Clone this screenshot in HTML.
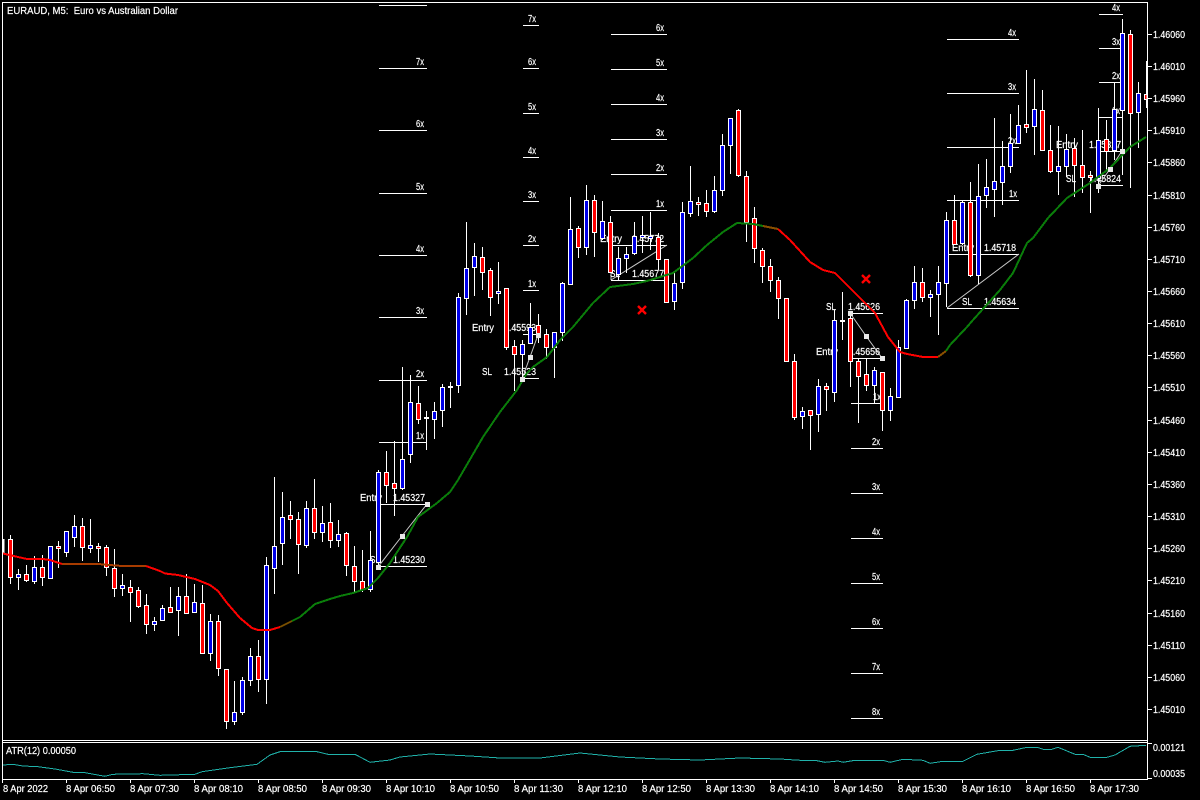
<!DOCTYPE html>
<html>
<head>
<meta charset="utf-8">
<title>EURAUD, M5</title>
<style>
html,body{margin:0;padding:0;background:#000;width:1200px;height:800px;overflow:hidden}
svg{display:block;position:absolute;left:0;top:0}
text{font-family:"Liberation Sans","DejaVu Sans",sans-serif;font-size:10px;fill:#fff;stroke:#fff;stroke-width:.2}
.c{shape-rendering:crispEdges}
.w{stroke:#fff;stroke-width:1;fill:none;shape-rendering:crispEdges}
.d{stroke:#c8c8c8;stroke-width:1;fill:none}
.m{fill:#e8e8e8}
.ma{fill:none;stroke-width:2;stroke-linejoin:round;shape-rendering:crispEdges}
</style>
</head>
<body>
<svg width="1200" height="800" viewBox="0 0 1200 800" xmlns="http://www.w3.org/2000/svg">
<rect width="1200" height="800" fill="#000"/>

<!-- Level lines -->
<path class="w" d="M379 5.5H427M379 68.5H427M379 130.5H427M379 193.5H427M379 255.5H427M379 317.5H427M379 380.5H427M379 442.5H427M379 504.5H427M379 566.5H427
M523 25.5H539M523 68.5H539M523 113.5H539M523 157.5H539M523 201.5H539M523 245.5H539M523 290.5H539M523 334.5H539M523 378.5H539
M611 34.5H667M611 69.5H667M611 104.5H667M611 139.5H667M611 174.5H667M611 210.5H667M611 245.5H667M611 280.5H667
M851 313.5H883M851 358.5H883M851 403.5H883M851 448.5H883M851 493.5H883M851 538.5H883M851 583.5H883M851 628.5H883M851 673.5H883M851 718.5H883
M947 39.5H1019M947 93.5H1019M947 147.5H1019M947 200.5H1019M947 254.5H1019M947 308.5H1019
M1099 14.5H1123M1099 48.5H1123M1099 82.5H1123M1099 117.5H1123M1099 151.5H1123M1099 185.5H1123"/>
<path class="d" d="M378 567L402 536L427 504M522 379L530 357L538 335M611 280L667 245M611 280V272M850 313L866 336L882 358M947 308L1019 254M1098 186L1110 169L1122 151"/>

<!-- Level labels -->
<text x="416" y="65" textLength="8" lengthAdjust="spacingAndGlyphs">7x</text>
<text x="416" y="127" textLength="8" lengthAdjust="spacingAndGlyphs">6x</text>
<text x="416" y="190" textLength="8" lengthAdjust="spacingAndGlyphs">5x</text>
<text x="416" y="252" textLength="8" lengthAdjust="spacingAndGlyphs">4x</text>
<text x="416" y="314" textLength="8" lengthAdjust="spacingAndGlyphs">3x</text>
<text x="416" y="377" textLength="8" lengthAdjust="spacingAndGlyphs">2x</text>
<text x="416" y="439" textLength="8" lengthAdjust="spacingAndGlyphs">1x</text>
<text x="360" y="501" textLength="22" lengthAdjust="spacingAndGlyphs">Entry</text>
<text x="393" y="501" textLength="32" lengthAdjust="spacingAndGlyphs">1.45327</text>
<text x="370" y="563" textLength="10" lengthAdjust="spacingAndGlyphs">SL</text>
<text x="393" y="563" textLength="32" lengthAdjust="spacingAndGlyphs">1.45230</text>

<text x="528" y="22" textLength="8" lengthAdjust="spacingAndGlyphs">7x</text>
<text x="528" y="65" textLength="8" lengthAdjust="spacingAndGlyphs">6x</text>
<text x="528" y="110" textLength="8" lengthAdjust="spacingAndGlyphs">5x</text>
<text x="528" y="154" textLength="8" lengthAdjust="spacingAndGlyphs">4x</text>
<text x="528" y="198" textLength="8" lengthAdjust="spacingAndGlyphs">3x</text>
<text x="528" y="242" textLength="8" lengthAdjust="spacingAndGlyphs">2x</text>
<text x="528" y="287" textLength="8" lengthAdjust="spacingAndGlyphs">1x</text>
<text x="472" y="331" textLength="22" lengthAdjust="spacingAndGlyphs">Entry</text>
<text x="504" y="331" textLength="32" lengthAdjust="spacingAndGlyphs">1.45593</text>
<text x="482" y="375" textLength="10" lengthAdjust="spacingAndGlyphs">SL</text>
<text x="504" y="375" textLength="32" lengthAdjust="spacingAndGlyphs">1.45523</text>

<text x="656" y="31" textLength="8" lengthAdjust="spacingAndGlyphs">6x</text>
<text x="656" y="66" textLength="8" lengthAdjust="spacingAndGlyphs">5x</text>
<text x="656" y="101" textLength="8" lengthAdjust="spacingAndGlyphs">4x</text>
<text x="656" y="136" textLength="8" lengthAdjust="spacingAndGlyphs">3x</text>
<text x="656" y="171" textLength="8" lengthAdjust="spacingAndGlyphs">2x</text>
<text x="656" y="207" textLength="8" lengthAdjust="spacingAndGlyphs">1x</text>
<text x="600" y="242" textLength="22" lengthAdjust="spacingAndGlyphs">Entry</text>
<text x="632" y="242" textLength="32" lengthAdjust="spacingAndGlyphs">1.45772</text>
<text x="610" y="277" textLength="10" lengthAdjust="spacingAndGlyphs">SL</text>
<text x="632" y="277" textLength="32" lengthAdjust="spacingAndGlyphs">1.45677</text>

<text x="826" y="310" textLength="10" lengthAdjust="spacingAndGlyphs">SL</text>
<text x="848" y="310" textLength="32" lengthAdjust="spacingAndGlyphs">1.45626</text>
<text x="816" y="355" textLength="22" lengthAdjust="spacingAndGlyphs">Entry</text>
<text x="848" y="355" textLength="32" lengthAdjust="spacingAndGlyphs">1.45656</text>
<text x="873" y="400" textLength="8" lengthAdjust="spacingAndGlyphs">1x</text>
<text x="872" y="445" textLength="8" lengthAdjust="spacingAndGlyphs">2x</text>
<text x="872" y="490" textLength="8" lengthAdjust="spacingAndGlyphs">3x</text>
<text x="872" y="535" textLength="8" lengthAdjust="spacingAndGlyphs">4x</text>
<text x="872" y="580" textLength="8" lengthAdjust="spacingAndGlyphs">5x</text>
<text x="872" y="625" textLength="8" lengthAdjust="spacingAndGlyphs">6x</text>
<text x="872" y="670" textLength="8" lengthAdjust="spacingAndGlyphs">7x</text>
<text x="872" y="715" textLength="8" lengthAdjust="spacingAndGlyphs">8x</text>

<text x="1008" y="36" textLength="8" lengthAdjust="spacingAndGlyphs">4x</text>
<text x="1008" y="90" textLength="8" lengthAdjust="spacingAndGlyphs">3x</text>
<text x="1008" y="144" textLength="8" lengthAdjust="spacingAndGlyphs">2x</text>
<text x="1009" y="197" textLength="8" lengthAdjust="spacingAndGlyphs">1x</text>
<text x="952" y="251" textLength="22" lengthAdjust="spacingAndGlyphs">Entry</text>
<text x="984" y="251" textLength="32" lengthAdjust="spacingAndGlyphs">1.45718</text>
<text x="962" y="305" textLength="10" lengthAdjust="spacingAndGlyphs">SL</text>
<text x="984" y="305" textLength="32" lengthAdjust="spacingAndGlyphs">1.45634</text>

<text x="1112" y="11" textLength="8" lengthAdjust="spacingAndGlyphs">4x</text>
<text x="1112" y="45" textLength="8" lengthAdjust="spacingAndGlyphs">3x</text>
<text x="1112" y="79" textLength="8" lengthAdjust="spacingAndGlyphs">2x</text>
<text x="1112" y="114" textLength="8" lengthAdjust="spacingAndGlyphs">1x</text>
<text x="1056" y="148" textLength="22" lengthAdjust="spacingAndGlyphs">Entry</text>
<text x="1089" y="148" textLength="32" lengthAdjust="spacingAndGlyphs">1.45817</text>
<text x="1066" y="182" textLength="10" lengthAdjust="spacingAndGlyphs">SL</text>
<text x="1089" y="182" textLength="32" lengthAdjust="spacingAndGlyphs">1.45824</text>

<!-- Candle wicks -->
<path class="w" d="M10.5 535V584M18.5 569V590M26.5 565V582M34.5 556V584M42.5 555V586M50.5 546V578M58.5 541V568M66.5 531V557M74.5 515V547M82.5 518V561M90.5 519V553M98.5 543V562M106.5 545V576M114.5 549V597M122.5 574V596M130.5 580V622M138.5 587V608M146.5 594V634M154.5 617V631M162.5 605V620M170.5 587V612M178.5 587V636M186.5 574V614M194.5 584V613M202.5 585V654M210.5 614V661M218.5 615V676M226.5 669V729M234.5 681V725M242.5 677V715M250.5 648V686M258.5 640V692M266.5 557V704M274.5 477V594M282.5 492V565M290.5 501V539M298.5 512V574M306.5 501V548M314.5 479V539M322.5 506V542M330.5 503V548M338.5 520V547M346.5 532V576M354.5 546V592M362.5 550V592M370.5 531V592M378.5 470V565M386.5 451V503M394.5 441V516M402.5 367V490M410.5 375V463M418.5 386V424M426.5 411V450M434.5 402V439M442.5 384V427M450.5 382V408M458.5 293V393M466.5 222V315M474.5 243V296M482.5 247V290M490.5 268V316M498.5 262V304M506.5 288V350M514.5 340V391M522.5 340V380M530.5 303V344M538.5 314V343M546.5 329V359M554.5 332V378M562.5 282V341M570.5 197V284M578.5 226V258M586.5 185V255M594.5 195V257M602.5 201V240M610.5 216V273M618.5 247V280M626.5 247V273M634.5 222V255M642.5 216V253M650.5 212V250M658.5 233V270M666.5 259V303M674.5 273V310M682.5 202V289M690.5 166V217M698.5 197V216M706.5 190V217M714.5 176V213M722.5 134V196M730.5 118V174M738.5 109V177M746.5 171V242M754.5 207V263M762.5 248V283M770.5 259V292M778.5 277V319M786.5 298V361M794.5 354V420M802.5 407V429M810.5 410V450M818.5 379V432M826.5 383V411M834.5 310V402M842.5 292V340M850.5 314V387M858.5 358V423M866.5 358V391M874.5 367V403M882.5 372V431M890.5 388V421M898.5 340V397M906.5 299V349M914.5 266V309M922.5 268V302M930.5 290V317M938.5 266V335M946.5 212V307M954.5 195V245M962.5 200V245M970.5 182V277M978.5 164V284M986.5 159V208M994.5 118V217M1002.5 141V205M1010.5 114V173M1018.5 105V143M1026.5 70V133M1034.5 79V155M1042.5 90V150M1050.5 125V173M1058.5 126V195M1066.5 134V177M1074.5 138V197M1082.5 130V193M1090.5 171V213M1098.5 108V193M1106.5 120V170M1114.5 83V160M1122.5 19V175M1130.5 30V188M1138.5 82V148M1146.5 61V108"/>

<!-- Blue bodies -->
<path class="c" fill="#0000e6" stroke="#fff" stroke-width="1" d="M3.5 539.5h.5v13h-.5zM16.5 574.5h4v3h-4zM32.5 567.5h4v14h-4zM48.5 546.5h4v32h-4zM64.5 531.5h4v21h-4zM72.5 526.5h4v11h-4zM88.5 545.5h4v3h-4zM120.5 585.5h4v3h-4zM152.5 621.5h4v3h-4zM160.5 608.5h4v12h-4zM176.5 596.5h4v14h-4zM192.5 602.5h4v10h-4zM208.5 621.5h4v32h-4zM232.5 712.5h4v9h-4zM240.5 680.5h4v32h-4zM248.5 656.5h4v24h-4zM264.5 565.5h4v114h-4zM272.5 546.5h4v22h-4zM280.5 517.5h4v26h-4zM304.5 508.5h4v37h-4zM320.5 523.5h4v9h-4zM336.5 534.5h4v6h-4zM368.5 560.5h4v29h-4zM376.5 472.5h4v90h-4zM400.5 459.5h4v29h-4zM408.5 402.5h4v52h-4zM424.5 417.5h4v1h-4zM432.5 411.5h4v8h-4zM440.5 387.5h4v23h-4zM448.5 386.5h4v1h-4zM456.5 297.5h4v88h-4zM464.5 268.5h4v30h-4zM472.5 256.5h4v11h-4zM496.5 291.5h4v2h-4zM520.5 344.5h4v10h-4zM528.5 327.5h4v16h-4zM552.5 332.5h4v15h-4zM560.5 283.5h4v49h-4zM568.5 229.5h4v55h-4zM584.5 200.5h4v47h-4zM600.5 221.5h4v17h-4zM616.5 258.5h4v16h-4zM624.5 254.5h4v4h-4zM632.5 236.5h4v17h-4zM640.5 235.5h4v2h-4zM648.5 236.5h4v2h-4zM672.5 283.5h4v18h-4zM680.5 212.5h4v70h-4zM688.5 201.5h4v12h-4zM712.5 190.5h4v21h-4zM720.5 145.5h4v45h-4zM728.5 118.5h4v27h-4zM800.5 411.5h4v5h-4zM816.5 386.5h4v28h-4zM832.5 320.5h4v72h-4zM840.5 320.5h4v1h-4zM872.5 370.5h4v15h-4zM888.5 396.5h4v14h-4zM896.5 347.5h4v50h-4zM904.5 300.5h4v48h-4zM912.5 282.5h4v18h-4zM928.5 294.5h4v3h-4zM936.5 282.5h4v12h-4zM944.5 220.5h4v63h-4zM960.5 202.5h4v41h-4zM976.5 196.5h4v79h-4zM984.5 187.5h4v8h-4zM992.5 181.5h4v8h-4zM1000.5 166.5h4v16h-4zM1008.5 143.5h4v23h-4zM1016.5 125.5h4v18h-4zM1032.5 109.5h4v17h-4zM1056.5 166.5h4v5h-4zM1064.5 149.5h4v17h-4zM1096.5 140.5h4v38h-4zM1112.5 109.5h4v41h-4zM1120.5 33.5h4v77h-4zM1136.5 93.5h4v19h-4z"/>

<!-- Red bodies -->
<path class="c" fill="#ff0000" stroke="#fff" stroke-width="1" d="M8.5 539.5h4v38h-4zM24.5 574.5h4v6h-4zM40.5 567.5h4v10h-4zM56.5 546.5h4v2h-4zM80.5 526.5h4v21h-4zM96.5 546.5h4v2h-4zM104.5 547.5h4v20h-4zM112.5 568.5h4v20h-4zM128.5 587.5h4v5h-4zM136.5 590.5h4v16h-4zM144.5 605.5h4v19h-4zM168.5 607.5h4v5h-4zM184.5 596.5h4v17h-4zM200.5 603.5h4v50h-4zM216.5 621.5h4v47h-4zM224.5 669.5h4v52h-4zM256.5 656.5h4v23h-4zM288.5 515.5h4v4h-4zM296.5 519.5h4v25h-4zM312.5 508.5h4v24h-4zM328.5 522.5h4v18h-4zM344.5 533.5h4v32h-4zM352.5 566.5h4v15h-4zM360.5 581.5h4v8h-4zM384.5 472.5h4v13h-4zM392.5 483.5h4v5h-4zM416.5 403.5h4v16h-4zM480.5 257.5h4v15h-4zM488.5 270.5h4v27h-4zM504.5 288.5h4v59h-4zM512.5 346.5h4v8h-4zM536.5 325.5h4v10h-4zM544.5 334.5h4v13h-4zM576.5 228.5h4v19h-4zM592.5 200.5h4v32h-4zM608.5 222.5h4v50h-4zM656.5 237.5h4v22h-4zM664.5 259.5h4v43h-4zM696.5 202.5h4v2h-4zM704.5 203.5h4v8h-4zM736.5 110.5h4v65h-4zM744.5 176.5h4v46h-4zM752.5 218.5h4v30h-4zM760.5 250.5h4v16h-4zM768.5 266.5h4v14h-4zM776.5 280.5h4v18h-4zM784.5 298.5h4v63h-4zM792.5 361.5h4v56h-4zM808.5 410.5h4v5h-4zM824.5 386.5h4v3h-4zM848.5 318.5h4v43h-4zM856.5 361.5h4v15h-4zM864.5 374.5h4v11h-4zM880.5 372.5h4v38h-4zM920.5 282.5h4v15h-4zM952.5 220.5h4v24h-4zM968.5 202.5h4v73h-4zM1024.5 124.5h4v3h-4zM1040.5 110.5h4v40h-4zM1048.5 150.5h4v21h-4zM1072.5 148.5h4v17h-4zM1080.5 165.5h4v12h-4zM1088.5 175.5h4v2h-4zM1104.5 139.5h4v12h-4zM1128.5 34.5h4v79h-4zM1144.5 94.5h2.5v5h-2.5z"/>

<!-- Moving average -->
<polyline class="ma" stroke="#ff0000" points="3,553.5 18,557 27,559 43,559 50,560 62,564"/>
<polyline class="ma" stroke="#a83c00" points="62,564 98,564 122,566 146,566"/>
<polyline class="ma" stroke="#ff0000" points="146,566 160,571 165,573.5 178,575 195,579 210,585 218,591 227,603 240,618 252,628 258,630 270,630 280,627"/>
<polyline class="ma" stroke="#7a5000" points="280,627 292,621"/>
<polyline class="ma" stroke="#0a7d0a" points="292,621 300,617 315,604 330,599 340,596 353,593 368,588 378,578 390,563 407,537 418,517 437,503 450,492 458,480 483,437 500,412 517,390 527,373 533,367 547,357 560,340 573,327 593,303 610,287 633,284 647,281 673,273 693,258 707,245 723,232 737,223 753,224 763,226"/>
<polyline class="ma" stroke="#8a5000" points="763,226 778,229"/>
<polyline class="ma" stroke="#ff0000" points="778,229 790,240 810,262 823,270 835,273 847,285 875,313 888,337 900,352 907,354 923,357 938,357"/>
<polyline class="ma" stroke="#8a5000" points="938,357 946,351"/>
<polyline class="ma" stroke="#0a7d0a" points="946,351 950,345 967,327 973,320 1000,290 1013,273 1027,243 1033,238 1048,218 1067,198 1090,183 1110,168 1130,147 1146,137"/>

<!-- Markers -->
<path class="m c" d="M376 565h5v5h-5zM400 534h5v5h-5zM425 502h5v5h-5zM520 377h5v5h-5zM528 355h5v5h-5zM536 333h5v5h-5zM848 311h5v5h-5zM864 334h5v5h-5zM880 356h5v5h-5zM1096 184h5v5h-5zM1108 167h5v5h-5zM1120 149h5v5h-5z"/>
<path stroke="#f00" stroke-width="2.4" fill="none" d="M638 306L646 314M646 306L638 314M862 275L870 283M870 275L862 283"/>

<!-- Frame -->
<rect x="0" y="0" width="2" height="800" fill="#000"/>
<rect x="1148" y="0" width="52" height="800" fill="#000"/>
<rect x="0" y="741" width="1147" height="1" fill="#000"/>
<rect x="3" y="780" width="1145" height="20" fill="#000"/>
<path class="w" d="M2.5 2V780M2 2.5H1148M1147.5 2V780M2 740.5H1148M2 742.5H1148M2 779.5H1148"/>
<path class="w" d="M1148 34.5h4M1148 66.5h4M1148 98.5h4M1148 130.5h4M1148 162.5h4M1148 195.5h4M1148 227.5h4M1148 259.5h4M1148 291.5h4M1148 323.5h4M1148 355.5h4M1148 387.5h4M1148 420.5h4M1148 452.5h4M1148 484.5h4M1148 516.5h4M1148 548.5h4M1148 580.5h4M1148 613.5h4M1148 645.5h4M1148 677.5h4M1148 709.5h4M1148 743.5h4M1148 778.5h4
M2.5 780v3M66.5 780v3M130.5 780v3M194.5 780v3M258.5 780v3M322.5 780v3M386.5 780v3M450.5 780v3M514.5 780v3M578.5 780v3M642.5 780v3M706.5 780v3M770.5 780v3M834.5 780v3M898.5 780v3M962.5 780v3M1026.5 780v3M1090.5 780v3"/>

<!-- ATR -->
<polyline class="c" fill="none" stroke="#20b2aa" stroke-width="1" points="3,765 13,764.3 23,766 38,766.7 55,769 73,772.3 85,772.7 105,776.3 113,774.3 143,773.7 160,775.3 195,774.3 202,771.7 230,767.7 257,764.3 270,755 280,751.7 317,751.7 328,754.3 355,754.3 370,762.3 390,760 400,757 430,754 470,756 500,758 540,758 580,753 620,757 660,759 700,760 740,758 780,759 800,760.3 815,760.3 825,762.3 838,761 843,762.3 855,760.3 883,760.3 890,762.3 903,759.3 923,760.3 930,763.3 943,761.3 963,761.3 977,754.3 1000,750.3 1013,750.3 1027,747.3 1037,747.3 1043,749.3 1052,749.3 1058,747.3 1075,754.3 1083,754.3 1090,757.3 1107,757.3 1115,755 1130,746.3 1146,745.3"/>
<text x="6" y="754" textLength="70" lengthAdjust="spacingAndGlyphs">ATR(12) 0.00050</text>
<text x="7" y="14" textLength="171" lengthAdjust="spacingAndGlyphs" xml:space="preserve">EURAUD, M5:  Euro vs Australian Dollar</text>

<!-- Price axis -->
<text x="1153" y="38" textLength="32" lengthAdjust="spacingAndGlyphs">1.46060</text>
<text x="1153" y="70" textLength="32" lengthAdjust="spacingAndGlyphs">1.46010</text>
<text x="1153" y="102" textLength="32" lengthAdjust="spacingAndGlyphs">1.45960</text>
<text x="1153" y="134" textLength="32" lengthAdjust="spacingAndGlyphs">1.45910</text>
<text x="1153" y="166" textLength="32" lengthAdjust="spacingAndGlyphs">1.45860</text>
<text x="1153" y="199" textLength="32" lengthAdjust="spacingAndGlyphs">1.45810</text>
<text x="1153" y="231" textLength="32" lengthAdjust="spacingAndGlyphs">1.45760</text>
<text x="1153" y="263" textLength="32" lengthAdjust="spacingAndGlyphs">1.45710</text>
<text x="1153" y="295" textLength="32" lengthAdjust="spacingAndGlyphs">1.45660</text>
<text x="1153" y="327" textLength="32" lengthAdjust="spacingAndGlyphs">1.45610</text>
<text x="1153" y="359" textLength="32" lengthAdjust="spacingAndGlyphs">1.45560</text>
<text x="1153" y="391" textLength="32" lengthAdjust="spacingAndGlyphs">1.45510</text>
<text x="1153" y="424" textLength="32" lengthAdjust="spacingAndGlyphs">1.45460</text>
<text x="1153" y="456" textLength="32" lengthAdjust="spacingAndGlyphs">1.45410</text>
<text x="1153" y="488" textLength="32" lengthAdjust="spacingAndGlyphs">1.45360</text>
<text x="1153" y="520" textLength="32" lengthAdjust="spacingAndGlyphs">1.45310</text>
<text x="1153" y="552" textLength="32" lengthAdjust="spacingAndGlyphs">1.45260</text>
<text x="1153" y="584" textLength="32" lengthAdjust="spacingAndGlyphs">1.45210</text>
<text x="1153" y="617" textLength="32" lengthAdjust="spacingAndGlyphs">1.45160</text>
<text x="1153" y="649" textLength="32" lengthAdjust="spacingAndGlyphs">1.45110</text>
<text x="1153" y="681" textLength="32" lengthAdjust="spacingAndGlyphs">1.45060</text>
<text x="1153" y="713" textLength="32" lengthAdjust="spacingAndGlyphs">1.45010</text>
<text x="1153" y="751" textLength="32" lengthAdjust="spacingAndGlyphs">0.00121</text>
<text x="1153" y="777" textLength="32" lengthAdjust="spacingAndGlyphs">0.00035</text>

<!-- Time axis -->
<text x="3" y="792" textLength="45" lengthAdjust="spacingAndGlyphs">8 Apr 2022</text>
<text x="66" y="792" textLength="49" lengthAdjust="spacingAndGlyphs">8 Apr 06:50</text>
<text x="130" y="792" textLength="49" lengthAdjust="spacingAndGlyphs">8 Apr 07:30</text>
<text x="194" y="792" textLength="49" lengthAdjust="spacingAndGlyphs">8 Apr 08:10</text>
<text x="258" y="792" textLength="49" lengthAdjust="spacingAndGlyphs">8 Apr 08:50</text>
<text x="322" y="792" textLength="49" lengthAdjust="spacingAndGlyphs">8 Apr 09:30</text>
<text x="386" y="792" textLength="49" lengthAdjust="spacingAndGlyphs">8 Apr 10:10</text>
<text x="450" y="792" textLength="49" lengthAdjust="spacingAndGlyphs">8 Apr 10:50</text>
<text x="514" y="792" textLength="49" lengthAdjust="spacingAndGlyphs">8 Apr 11:30</text>
<text x="578" y="792" textLength="49" lengthAdjust="spacingAndGlyphs">8 Apr 12:10</text>
<text x="642" y="792" textLength="49" lengthAdjust="spacingAndGlyphs">8 Apr 12:50</text>
<text x="706" y="792" textLength="49" lengthAdjust="spacingAndGlyphs">8 Apr 13:30</text>
<text x="770" y="792" textLength="49" lengthAdjust="spacingAndGlyphs">8 Apr 14:10</text>
<text x="834" y="792" textLength="49" lengthAdjust="spacingAndGlyphs">8 Apr 14:50</text>
<text x="898" y="792" textLength="49" lengthAdjust="spacingAndGlyphs">8 Apr 15:30</text>
<text x="962" y="792" textLength="49" lengthAdjust="spacingAndGlyphs">8 Apr 16:10</text>
<text x="1026" y="792" textLength="49" lengthAdjust="spacingAndGlyphs">8 Apr 16:50</text>
<text x="1090" y="792" textLength="49" lengthAdjust="spacingAndGlyphs">8 Apr 17:30</text>
</svg>
</body>
</html>
